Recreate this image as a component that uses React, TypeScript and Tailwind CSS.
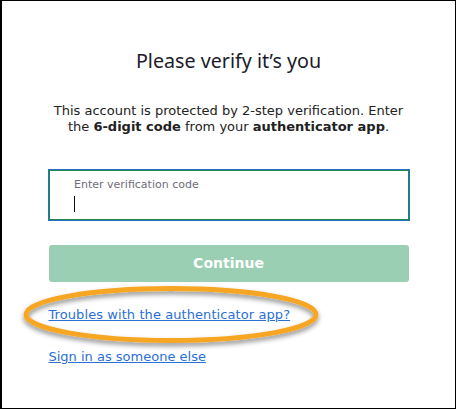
import React from "react";

export default function App() {
  return (
    <div className="relative w-[456px] h-[409px] bg-white border border-black border-l-2 overflow-hidden" style={{ fontFamily: '"DejaVu Sans", Verdana, sans-serif' }}>
      <div className="flex flex-col items-center pt-[47px]">
        <h1 className="text-[19.7px] leading-[26px] text-[#1c1c2a] text-center" style={{ fontFamily: '"Noto Sans", sans-serif' }}>
          Please verify it’s you
        </h1>
        <p className="mt-[29px] text-[13px] leading-[16px] text-[#222] text-center w-[400px]">
          This account is protected by 2-step verification. Enter
          <br />
          the <b>6-digit code</b> from your <b>authenticator app</b>.
        </p>
        <div className="mt-[34px] w-[362px] h-[52px] border border-[#2a6dc5] shadow-[inset_0_0_0_1px_#1b8a4a] pl-[25px] pt-[8px] ml-[1px]">
          <div className="text-[11px] leading-[14px] text-[#6e6e7a]">Enter verification code</div>
          <div className="mt-[4px] w-[1px] h-[16px] bg-[#111]" />
        </div>
        <div className="mt-[24px] w-[360px] h-[37px] rounded-[3px] bg-[#9acfb4] flex items-center justify-center text-white font-bold text-[14px]">
          Continue
        </div>
        <div className="w-[360px] flex flex-col items-start">
          <a className="mt-[25px] text-[13px] tracking-[0.08px] leading-[16px] text-[#2a6fd6] underline" href="#">Troubles with the authenticator app?</a>
          <a className="mt-[26px] text-[13px] leading-[16px] text-[#2a6fd6] underline" href="#">Sign in as someone else</a>
        </div>
      </div>
      <svg className="absolute left-0 top-0 pointer-events-none" width="456" height="409">
        <defs>
          <filter id="sh" x="-20%" y="-50%" width="140%" height="200%">
            <feDropShadow dx="0" dy="3" stdDeviation="2.5" floodColor="#000" floodOpacity="0.45" />
          </filter>
        </defs>
        <ellipse cx="169" cy="313.5" rx="145" ry="26" fill="none" stroke="#f6a623" strokeWidth="5" filter="url(#sh)" />
      </svg>
    </div>
  );
}
